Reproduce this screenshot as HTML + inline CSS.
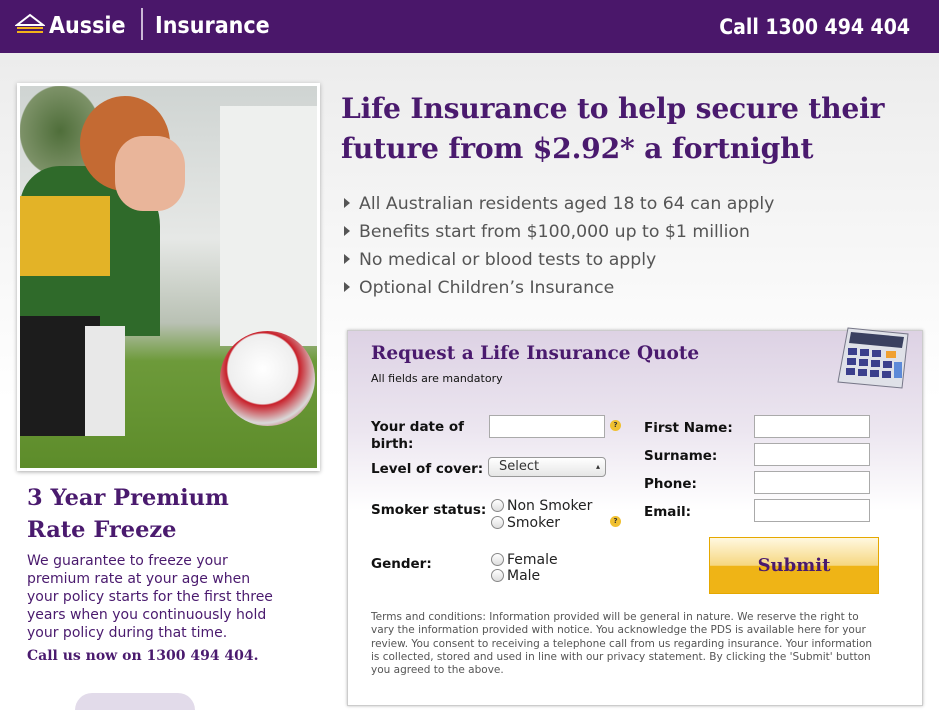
<!DOCTYPE html>
<html style="background:#fff;overflow:hidden;height:710px"><head><meta charset="utf-8"><style>
*{margin:0;padding:0;box-sizing:border-box}
body{width:939px;height:710px;overflow:hidden;font-family:"DejaVu Sans","Liberation Sans",sans-serif;background:linear-gradient(#e9e9e9 0,#f4f4f4 200px,#fff 400px);position:relative}
.hdr{position:absolute;left:0;top:0;width:939px;height:53px;background:#4a176a;color:#fff}
.serif{font-family:"DejaVu Serif","Liberation Serif",serif}
.abs{position:absolute}
h1{position:absolute;left:341px;top:89px;font:bold 28.2px/40px "DejaVu Serif",serif;color:#4a1a6e;letter-spacing:-0.2px}
ul{position:absolute;left:344px;top:190px;list-style:none;color:#555;font-size:17.3px;line-height:28px}
ul li:before{content:"";display:inline-block;border-left:6px solid #555;border-top:5px solid transparent;border-bottom:5px solid transparent;margin-right:9px;vertical-align:1px}
.form{position:absolute;left:347px;top:330px;width:576px;height:376px;border:1px solid #ccc;background:linear-gradient(#ddd2e4 0,#ece6f0 100px,#fff 180px);box-shadow:0 0 3px #bbb}
.lbl{position:absolute;font-weight:bold;font-size:13.5px;color:#111;line-height:17px}
.inp{position:absolute;width:116px;height:23px;border:1px solid #aaa;background:#fff}
.rad{position:absolute;font-size:14px;color:#222;line-height:17px}
.rad i{display:inline-block;width:13px;height:13px;border:1px solid #888;border-radius:50%;background:linear-gradient(#fff,#ddd);vertical-align:-2px;margin-right:3px}
.q{position:absolute;width:11px;height:11px;border-radius:50%;background:#f0c030;font-size:7px;font-weight:bold;text-align:center;line-height:11px;color:#333}
</style></head><body>
<div class="hdr">
 <svg class="abs" style="left:15px;top:13px" width="30" height="22" viewBox="0 0 30 22"><path d="M2 12 L15 2 L28 12 Z" fill="none" stroke="#fff" stroke-width="2"/><rect x="2" y="14" width="26" height="2" fill="#f2b31a"/><rect x="2" y="18" width="26" height="2" fill="#f2b31a"/></svg>
 <div class="abs" style="left:49px;top:10px;font:bold 23px/32px 'DejaVu Sans Condensed','Liberation Sans Narrow',sans-serif">Aussie</div>
 <div class="abs" style="left:141px;top:8px;width:2px;height:32px;background:#cbb8d6"></div>
 <div class="abs" style="left:155px;top:10px;font:bold 23px/32px 'DejaVu Sans Condensed','Liberation Sans Narrow',sans-serif">Insurance</div>
 <div class="abs" style="right:29px;top:14px;font:bold 21px/26px 'DejaVu Sans Condensed','Liberation Sans',sans-serif">Call 1300 494 404</div>
</div>
<div class="abs" style="left:17px;top:83px;width:303px;height:388px;background:#fff;box-shadow:0 1px 4px #aaa;padding:3px">
 <div style="position:relative;width:297px;height:382px;overflow:hidden;background:linear-gradient(#cfd4d2 0,#e6e8e6 40%,#b9c1b4 62%,#6d9a3a 72%,#5d8c2a 100%)">
  <div class="abs" style="left:0;top:0;width:80px;height:90px;background:radial-gradient(#4f6e3a,#7d9268 70%,transparent 72%)"></div>
  <div class="abs" style="left:200px;top:20px;width:97px;height:240px;background:#eef0ee"></div>
  <div class="abs" style="left:0;top:80px;width:140px;height:170px;background:#2f6a2a;border-radius:40px 60px 0 0"></div>
  <div class="abs" style="left:0;top:110px;width:90px;height:80px;background:#e3b327"></div>
  <div class="abs" style="left:60px;top:10px;width:90px;height:95px;border-radius:50%;background:#c46a33"></div>
  <div class="abs" style="left:95px;top:50px;width:70px;height:75px;border-radius:40%;background:#e9b59a"></div>
  <div class="abs" style="left:0;top:230px;width:80px;height:120px;background:#1c1c1c"></div>
  <div class="abs" style="left:65px;top:240px;width:40px;height:110px;background:#e8e8e8"></div>
  <div class="abs" style="left:200px;top:245px;width:95px;height:95px;border-radius:50%;background:radial-gradient(circle at 45% 40%,#fff 0,#eee 45%,#c8202a 47%,#d9d9d9 70%,#b11 90%)"></div>
 </div>
</div>
<div class="abs serif" style="left:27px;top:482px;font-weight:bold;font-size:22.5px;line-height:32px;color:#4a1a6e">3 Year Premium<br>Rate Freeze</div>
<div class="abs" style="left:27px;top:552px;font-size:14px;line-height:18px;color:#4a1a6e;width:250px">We guarantee to freeze your premium rate at your age when your policy starts for the first three years when you continuously hold your policy during that time.</div>
<div class="abs serif" style="left:27px;top:648px;font-weight:bold;font-size:14px;color:#4a1a6e">Call us now on 1300 494 404.</div>
<div class="abs" style="left:75px;top:693px;width:120px;height:17px;border-radius:60px 60px 0 0;background:#e2dbea"></div>
<h1>Life Insurance to help secure their<br>future from $2.92* a fortnight</h1>
<ul><li>All Australian residents aged 18 to 64 can apply</li><li>Benefits start from $100,000 up to $1 million</li><li>No medical or blood tests to apply</li><li>Optional Children’s Insurance</li></ul>
<div class="form">
 <div class="abs serif" style="left:23px;top:12px;font-weight:bold;font-size:18.5px;color:#4a1a6e">Request a Life Insurance Quote</div>
 <div class="abs" style="left:23px;top:41px;font-size:11px;color:#111">All fields are mandatory</div>
 <svg class="abs" style="left:488px;top:-5px" width="75" height="66" viewBox="0 0 75 66"><path d="M12 2 L72 8 L66 62 L2 56 Z" fill="#dfe1e8" stroke="#778"/><path d="M15 6 L68 11 L66 22 L13 17Z" fill="#3a4060"/><g fill="#3b3f8c"><rect x="12" y="22" width="9" height="7"/><rect x="24" y="23" width="9" height="7"/><rect x="36" y="24" width="9" height="7"/><rect x="11" y="32" width="9" height="7"/><rect x="23" y="33" width="9" height="7"/><rect x="35" y="34" width="9" height="7"/><rect x="47" y="35" width="9" height="7"/><rect x="10" y="42" width="9" height="7"/><rect x="22" y="43" width="9" height="7"/><rect x="34" y="44" width="9" height="7"/><rect x="46" y="45" width="9" height="7"/></g><rect x="50" y="25" width="10" height="7" fill="#f0a030"/><rect x="58" y="36" width="8" height="16" fill="#5d8ad8"/></svg>
 <div class="lbl" style="left:23px;top:88px">Your date of<br>birth:</div>
 <div class="inp" style="left:141px;top:84px"></div><div class="q" style="left:262px;top:89px">?</div>
 <div class="lbl" style="left:23px;top:130px">Level of cover:</div>
 <div class="abs" style="left:140px;top:126px;width:118px;height:20px;border:1px solid #999;border-radius:4px;background:linear-gradient(#fff,#e6e6e6);font-size:13px;color:#333;padding-left:10px;line-height:18px">Select<span style="position:absolute;right:5px;top:0;font-size:8px">▴<br></span></div>
 <div class="lbl" style="left:23px;top:171px">Smoker status:</div>
 <div class="rad" style="left:143px;top:167px"><i></i>Non Smoker</div>
 <div class="rad" style="left:143px;top:184px"><i></i>Smoker</div><div class="q" style="left:262px;top:185px">?</div>
 <div class="lbl" style="left:23px;top:225px">Gender:</div>
 <div class="rad" style="left:143px;top:221px"><i></i>Female</div>
 <div class="rad" style="left:143px;top:237px"><i></i>Male</div>
 <div class="lbl" style="left:296px;top:89px">First Name:</div><div class="inp" style="left:406px;top:84px"></div>
 <div class="lbl" style="left:296px;top:117px">Surname:</div><div class="inp" style="left:406px;top:112px"></div>
 <div class="lbl" style="left:296px;top:145px">Phone:</div><div class="inp" style="left:406px;top:140px"></div>
 <div class="lbl" style="left:296px;top:173px">Email:</div><div class="inp" style="left:406px;top:168px"></div>
 <div class="abs serif" style="left:361px;top:206px;width:170px;height:57px;border:1px solid #e5a800;background:linear-gradient(#fff8e0 0,#f6d780 50%,#efb416 51%,#efb416 100%);text-align:center;line-height:55px;font-weight:bold;font-size:18px;color:#4a1a6e">Submit</div>
 <div class="abs" style="left:23px;top:280px;width:505px;font-size:10.5px;line-height:13.3px;color:#555">Terms and conditions: Information provided will be general in nature. We reserve the right to vary the information provided with notice. You acknowledge the PDS is available here for your review. You consent to receiving a telephone call from us regarding insurance. Your information is collected, stored and used in line with our privacy statement. By clicking the 'Submit' button you agreed to the above.</div>
</div>
</body></html>
